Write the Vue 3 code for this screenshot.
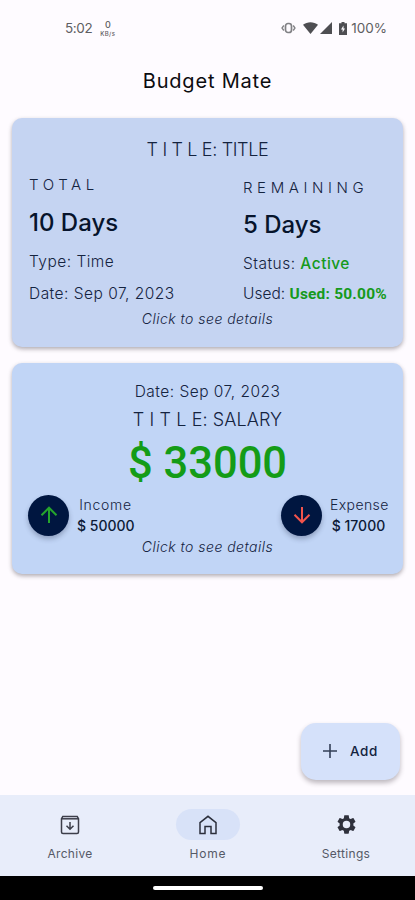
<template>
  <div class="phone">
    <header class="status-bar">
      <div class="clock">
        <span class="time">5:02</span>
        <span class="speed"><b>0</b><small>KB/s</small></span>
      </div>
      <div class="system">
        <svg class="vibrate" width="15" height="12" viewBox="0 0 15 12" fill="none" stroke="#808084">
          <rect x="4.500" y="1.500" width="6" height="9" rx="2.500" stroke-width="1.700" />
          <path d="M2.800 3.500 1 6l1.800 2.500M12.200 3.500 14 6l-1.800 2.500" stroke-width="1.300" />
        </svg>
        <svg class="wifi" width="15" height="12" viewBox="0 0 15 12" fill="#4e4e52">
          <path d="M0 2.800C4.200-.7 10.800-.7 15 2.800L7.500 12z" />
        </svg>
        <svg class="signal" width="12" height="12" viewBox="0 0 12 12" fill="#4e4e52">
          <path d="M12 0v12H0z" />
        </svg>
        <svg class="battery" width="8" height="13" viewBox="0 0 8 13">
          <path d="M2.500 0h3v1.300H8V13H0V1.300h2.500z" fill="#4e4e52" />
          <path d="M4.500 3.500 2 7.500h1.600v3L6 6.500H4.500z" fill="#fdfbff" />
        </svg>
        <span class="percent">100%</span>
      </div>
    </header>

    <h1 class="app-title"><span>Budget Mate</span></h1>

    <main class="cards">
      <section class="card time-card">
        <div class="card-title first">T I T L E: TITLE</div>
        <div class="columns">
          <div class="column">
            <div class="label">TOTAL</div>
            <div class="amount ten">{{ budget.total }}</div>
            <div class="line">Type: Time</div>
            <div class="line last">Date: {{ budget.date }}</div>
          </div>
          <div class="column right">
            <div class="label">REMAINING</div>
            <div class="amount">{{ budget.remaining }}</div>
            <div class="line">Status: <span class="active">Active</span></div>
            <div class="line last used">Used: <b>Used: {{ budget.used }}</b></div>
          </div>
        </div>
        <div class="hint">Click to see details</div>
      </section>

      <section class="card money-card">
        <div class="line centered">Date: {{ salary.date }}</div>
        <div class="card-title second">T I T L E: SALARY</div>
        <div class="balance">$ {{ salary.balance }}</div>
        <div class="flows">
          <div v-for="flow in flows" :key="flow.name" class="flow" :class="flow.kind">
            <div class="round">
              <svg width="18" height="18" viewBox="0 0 18 18" fill="none" stroke-width="2">
                <path v-if="flow.kind === 'income'" d="M9 17V2M1.500 9.200 9 1.700l7.500 7.500" />
                <path v-else d="M9 1v15M1.500 8.800 9 16.300l7.500-7.500" />
              </svg>
            </div>
            <div class="flow-text">
              <div class="flow-name">{{ flow.name }}</div>
              <div class="flow-value">$ {{ flow.value }}</div>
            </div>
          </div>
        </div>
        <div class="hint">Click to see details</div>
      </section>
    </main>

    <button class="add">
      <svg width="14" height="14" viewBox="0 0 14 14" stroke="#333f57" stroke-width="1.600">
        <path d="M7 0v14M0 7h14" />
      </svg>
      <span>Add</span>
    </button>

    <nav class="tabs">
      <div class="tab archive">
        <div class="pill">
          <svg width="20" height="20" viewBox="0 0 20 20" fill="none" stroke="#3c3e4a" stroke-width="1.500">
            <path d="M2.800 1.500h14.400l1.300 2.300V17q0 1.500-1.500 1.500H3Q1.500 18.500 1.500 17V3.800z" />
            <path d="M1.500 3.800h17" />
            <path d="M10 7v7M6.500 10.700l3.500 3.500 3.500-3.500" />
          </svg>
        </div>
        <span>Archive</span>
      </div>
      <div class="tab home">
        <div class="pill on">
          <svg width="18" height="20" viewBox="0 0 18 20" fill="none" stroke="#2b2f3c" stroke-width="1.500">
            <path d="M1 7.600 9 1.300l8 6.300V18.500h-5v-7H6v7H1z" />
          </svg>
        </div>
        <span>Home</span>
      </div>
      <div class="tab settings">
        <div class="pill">
          <svg width="23" height="23" viewBox="0 0 24 24" fill="#2f313c">
            <path d="M19.140 12.940c.04-.3.060-.61.060-.94s-.02-.64-.07-.94l2.030-1.580c.18-.14.230-.41.120-.61l-1.920-3.320c-.12-.22-.37-.29-.59-.22l-2.390.96c-.5-.38-1.030-.7-1.620-.94l-.36-2.540c-.04-.24-.24-.41-.48-.41h-3.840c-.24 0-.43.170-.47.410l-.36 2.540c-.59.240-1.130.57-1.620.94l-2.390-.96c-.22-.08-.47 0-.59.220L2.740 8.870c-.12.210-.08.470.12.610l2.030 1.580c-.05.300-.09.630-.09.940s.02.640.070.940l-2.030 1.580c-.18.140-.23.410-.12.610l1.920 3.320c.12.220.37.290.59.220l2.390-.96c.5.380 1.030.7 1.620.94l.36 2.540c.05.240.24.410.48.410h3.840c.24 0 .44-.17.470-.41l.36-2.540c.59-.24 1.130-.56 1.620-.94l2.390.96c.22.080.47 0 .59-.22l1.920-3.320c.12-.22.070-.47-.12-.61zM12 15.900a3.900 3.900 0 1 1 0-7.800 3.900 3.900 0 0 1 0 7.800z" />
          </svg>
        </div>
        <span>Settings</span>
      </div>
    </nav>
    <div class="gesture-bar"><i></i></div>
  </div>
</template>

<script setup>
const budget = {
  total: '10 Days',
  remaining: '5 Days',
  date: 'Sep 07, 2023',
  used: '50.00%',
};
const salary = { date: 'Sep 07, 2023', balance: 33000 };
const flows = [
  { kind: 'income', name: 'Income', value: 50000 },
  { kind: 'expense', name: 'Expense', value: 17000 },
];
</script>

<style>
body {
  margin: 0;
  background: #fefbff;
}
</style>

<style scoped>
.phone {
  width: 415px;
  height: 900px;
  display: flex;
  flex-direction: column;
  overflow: hidden;
  background: #fefbff;
  color: #14233f;
  font-family: Inter, "Liberation Sans", sans-serif;
  white-space: nowrap;
}
.status-bar {
  height: 56px;
  box-sizing: border-box;
  padding: 0 28px 0 65px;
  display: flex;
  justify-content: space-between;
  align-items: center;
  color: #5e5e62;
}
.clock, .system {
  display: flex;
  align-items: center;
}
.time {
  font-size: 13.5px;
  letter-spacing: -0.4px;
}
.speed {
  display: flex;
  flex-direction: column;
  align-items: center;
  margin-left: 8px;
}
.speed b {
  font-size: 9px;
  line-height: 11px;
  font-weight: 500;
}
.speed small {
  font-size: 6px;
  line-height: 8px;
  font-weight: 500;
  letter-spacing: 0.4px;
}
.wifi {
  margin-left: 7px;
}
.signal {
  margin-left: 2px;
}
.battery {
  margin: 0 4px 0 7px;
}
.percent {
  font-size: 13.5px;
}
.app-title {
  height: 62px;
  margin: 0;
  line-height: 51px;
  text-align: center;
  font-size: 20px;
  font-weight: 400;
  letter-spacing: 0.8px;
  color: #0c0c10;
}
.cards {
  display: flex;
  flex-direction: column;
  gap: 16px;
  padding: 0 12px;
}
.card {
  box-sizing: border-box;
  border-radius: 10px;
  padding: 0 17px;
  box-shadow: 0 2px 4px rgba(40, 30, 40, 0.36);
}
.time-card {
  height: 229px;
  padding-top: 19px;
  background: #c5d4f2;
}
.money-card {
  height: 211px;
  padding-top: 16px;
  background: #c1d5f6;
}
.card-title {
  text-align: center;
  font-size: 18px;
  line-height: 25px;
  font-weight: 300;
}
.card-title.first {
  letter-spacing: -0.35px;
}
.card-title.second {
  line-height: 30px;
  letter-spacing: 0.1px;
}
.columns {
  display: grid;
  grid-template-columns: 214px 1fr;
  height: 136px;
  margin-top: 10px;
}
.column {
  display: flex;
  flex-direction: column;
}
.column.right {
  padding-top: 3px;
}
.label {
  font-size: 15px;
  line-height: 25px;
  font-weight: 300;
  letter-spacing: 4.6px;
}
.amount {
  font-size: 24px;
  line-height: 50px;
  font-weight: 500;
  color: #07142c;
}
.amount.ten {
  line-height: 51px;
}
.line {
  font-size: 15.5px;
  line-height: 28px;
  font-weight: 300;
  letter-spacing: 0.48px;
}
.line.last {
  margin-top: 4px;
}
.right .line.last {
  margin-top: 2px;
}
.active {
  color: #159a1c;
  font-weight: 500;
}
.line.used {
  letter-spacing: 0;
}
.used b {
  font-family: Roboto, sans-serif;
  font-weight: 700;
  letter-spacing: 0.2px;
  color: #159a1c;
}
.hint {
  text-align: center;
  font-size: 14px;
  line-height: 22px;
  font-style: italic;
  font-weight: 300;
  letter-spacing: 0.47px;
}
.line.centered {
  text-align: center;
  line-height: 26px;
}
.balance {
  text-align: center;
  font-family: Roboto, sans-serif;
  font-size: 43.5px;
  line-height: 57px;
  font-weight: 500;
  color: #149c17;
}
.flows {
  display: flex;
  justify-content: space-between;
  height: 42px;
  margin: 2px -1px 0 -1px;
}
.flow {
  display: flex;
  align-items: center;
  gap: 8px;
}
.round {
  width: 41px;
  height: 41px;
  border-radius: 50%;
  display: flex;
  align-items: center;
  justify-content: center;
  background: #001640;
  box-shadow: 0 3px 5px rgba(30, 40, 70, 0.3);
}
.income .round {
  stroke: #25a52c;
}
.expense .round {
  stroke: #f2544c;
}
.flow-text {
  width: 57px;
  text-align: center;
  font-size: 14px;
  line-height: 21px;
}
.flow-name {
  font-weight: 300;
  letter-spacing: 0.4px;
}
.income .flow-name {
  letter-spacing: 0.7px;
}
.flow-value {
  font-weight: 500;
  color: #0c1a36;
}
.add {
  align-self: flex-end;
  display: flex;
  align-items: center;
  gap: 13px;
  width: 99px;
  height: 57px;
  margin: auto 15px 15px 0;
  padding: 0 0 2px 22px;
  border: none;
  border-radius: 15px;
  background: #d5e1fa;
  box-shadow: 0 3px 5px rgba(50, 40, 50, 0.32);
  font: 500 13.5px Inter, sans-serif;
  letter-spacing: 0.6px;
  color: #14233f;
}
.tabs {
  display: flex;
  justify-content: space-between;
  height: 81px;
  box-sizing: border-box;
  padding: 14px 0 0 1px;
  background: #e8edfa;
}
.tab {
  flex: 1;
  display: flex;
  flex-direction: column;
  align-items: center;
  font-size: 12px;
  line-height: 27px;
  letter-spacing: 0.3px;
  color: #555966;
}
.home {
  letter-spacing: 0.8px;
}
.pill {
  width: 64px;
  height: 31px;
  display: flex;
  align-items: center;
  justify-content: center;
  border-radius: 16px;
}
.pill.on {
  background: #d8e2f8;
}
.gesture-bar {
  height: 24px;
  display: flex;
  justify-content: center;
  background: #000;
}
.gesture-bar i {
  width: 110px;
  height: 4px;
  margin-top: 10px;
  border-radius: 2px;
  background: #fff;
}
</style>
